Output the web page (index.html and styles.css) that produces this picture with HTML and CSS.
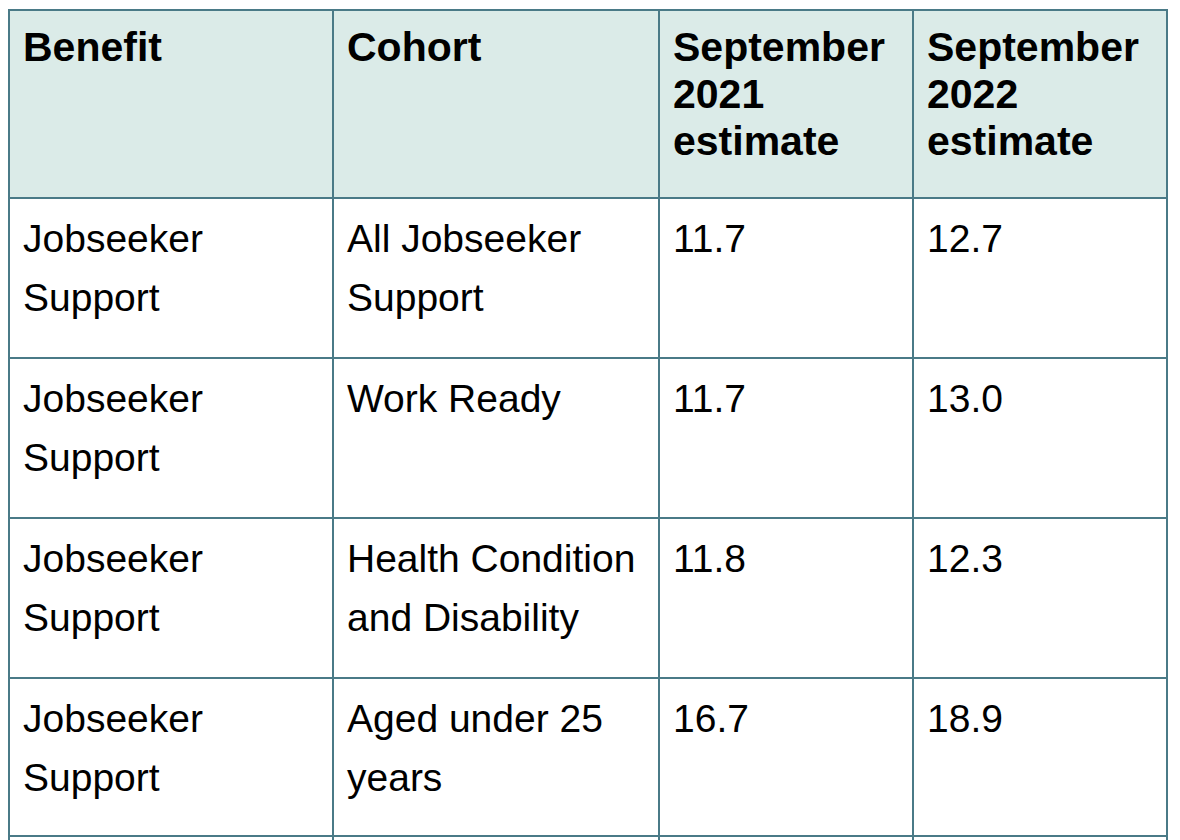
FILE: index.html
```html
<!DOCTYPE html>
<html lang="en">
<head>
<meta charset="utf-8">
<title>Benefit estimates</title>
<link rel="stylesheet" href="styles.css">
</head>
<body>
<table class="data">
  <colgroup>
    <col class="c1"><col class="c2"><col class="c3"><col class="c4">
  </colgroup>
  <thead>
    <tr>
      <th>Benefit</th>
      <th>Cohort</th>
      <th>September 2021 estimate</th>
      <th>September 2022 estimate</th>
    </tr>
  </thead>
  <tbody>
    <tr><td>Jobseeker Support</td><td>All Jobseeker Support</td><td>11.7</td><td>12.7</td></tr>
    <tr><td>Jobseeker Support</td><td>Work Ready</td><td>11.7</td><td>13.0</td></tr>
    <tr><td>Jobseeker Support</td><td>Health Condition and Disability</td><td>11.8</td><td>12.3</td></tr>
    <tr class="short"><td>Jobseeker Support</td><td>Aged under 25 years</td><td>16.7</td><td>18.9</td></tr>
    <tr class="next"><td></td><td></td><td></td><td></td></tr>
  </tbody>
</table>
</body>
</html>
```

FILE: styles.css
```css
html, body {
  margin: 0;
  padding: 0;
  background: #ffffff;
}
body {
  padding: 9px 0 0 8px;
  font-family: "Liberation Sans", Arial, Helvetica, sans-serif;
  color: #000;
}
.data {
  border-collapse: collapse;
  table-layout: fixed;
  width: 1158px;
}
.c1 { width: 324px; }
.c2 { width: 326px; }
.c3 { width: 254px; }
.c4 { width: 254px; }
.data th, .data td {
  border: 2px solid #4a7a87;
  text-align: left;
  vertical-align: top;
}
.data th {
  background: #dbebe8;
  font-weight: bold;
  font-size: 41px;
  line-height: 47px;
  padding: 13px 12px 32px 13px;
}
.data td {
  font-size: 39px;
  line-height: 59px;
  padding: 10px 12px 30px 13px;
}
.data .short td {
  padding-bottom: 28px;
}
.data .next td {
  height: 100px;
}
```
